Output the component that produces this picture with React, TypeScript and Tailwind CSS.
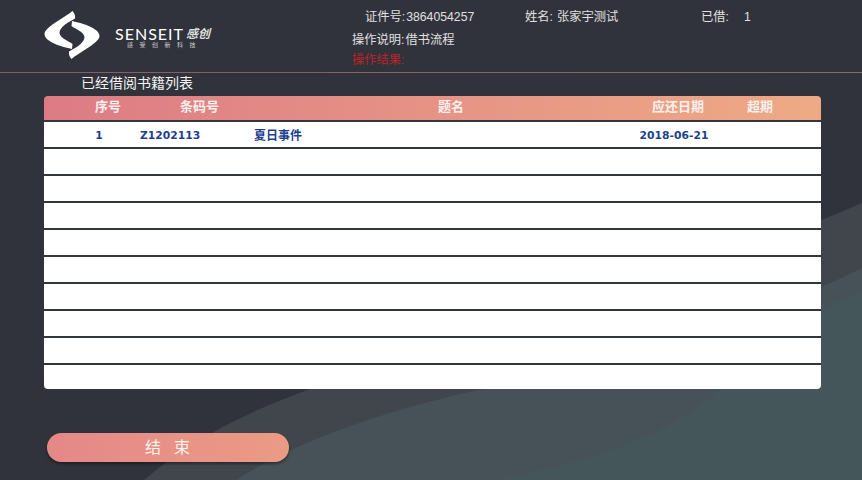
import React from "react";

const FONT = "font-['Liberation_Sans','Noto_Sans_CJK_SC',sans-serif]";

const rows = [
  { no: "1", code: "Z1202113", title: "夏日事件", due: "2018-06-21" },
  ...Array.from({ length: 9 }, () => ({ no: "", code: "", title: "", due: "" })),
];

const HALF =
  "M28 1 C30 3 31 6 30.5 8.5 C24 12 15 17 15 23 C15.5 28 24 31 28 34 L27.5 39 C18 37 0 32 0 24 C0 17 20 8 28 1 Z";

const Logo = () => (
  <svg width="56" height="50" viewBox="0 0 55 50" className="shrink-0">
    <g fill="#fff">
      <path d={HALF} />
      <path d={HALF} transform="rotate(180 27.5 25)" />
    </g>
  </svg>
);

export default function App() {
  return (
    <div className={`relative h-[480px] w-[862px] overflow-hidden bg-[#30333b] ${FONT}`}>
      {/* background waves */}
      <svg width="862" height="480" viewBox="0 0 862 480" className="absolute inset-0">
        <path d="M144 480 C190 440 250 410 313 388 C480 325 700 275 862 203 L862 480 Z" fill="#41464d" />
        <path d="M236 480 C290 445 380 410 489 388 C620 355 760 320 862 268 L862 480 Z" fill="#465257" />
        <path d="M495 480 C600 460 680 430 720 388 C750 355 780 325 822 308 L862 292 L862 480 Z" fill="#45565a" />
      </svg>

      <div className="relative flex h-full flex-col">
        <header className="flex h-[72px] shrink-0">
          <div className="flex w-[352px] shrink-0 items-start pl-[44px] pt-[10px]">
            <Logo />
            <div className="ml-[15px] mt-[16px] flex flex-col items-start">
              <div className="flex items-center leading-none text-white">
                <span className="font-['Lato',sans-serif] text-[16px] tracking-[1px]">SENSEIT</span>
                <span className="ml-[2px] text-[12px] font-bold italic text-[#dddddd]">感创</span>
              </div>
              <span className="ml-[12px] text-[6px] leading-none tracking-[6.5px] text-[#d0d0d0]">感受创新科技</span>
            </div>
          </div>
          <div className="flex flex-col pt-[7px] text-[12.25px] leading-[20px] text-[#e0e0e0]">
            <div className="flex">
              <span className="ml-[13px] w-[160px]">证件号:<span className="ml-[1px]">3864054257</span></span>
              <span className="w-[176px]">姓名:<span className="ml-[4px]">张家宇测试</span></span>
              <span className="w-[43px]">已借:</span>
              <span>1</span>
            </div>
            <div className="mt-[3px]">操作说明:<span className="ml-[1px]">借书流程</span></div>
            <div className="text-[#bd2226]">操作结果:</div>
          </div>
        </header>
        <div className="h-px bg-gradient-to-r from-[#8a5a68] to-[#8a6a60]" />

        <div className="pl-[81px] text-[14px] leading-[20px] text-[#f2f2f2]">已经借阅书籍列表</div>

        <div className="ml-[44px] mt-[3px] w-[777px] overflow-hidden rounded-[4px] bg-[#33353c]">
          <div className="grid h-[24px] grid-cols-[128px_55px_425px_52px_112px] items-center whitespace-nowrap bg-gradient-to-r from-[#dd7b85] to-[#eeaa85] pb-[2px] text-center text-[13px] font-bold leading-[22px] text-[#f8f0ee]">
            <span>序号</span>
            <span>条码号</span>
            <span className="pl-[23px]">题名</span>
            <span>应还日期</span>
            <span>超期</span>
          </div>
          {rows.map((row, i) => (
            <div
              key={i}
              className={`grid grid-cols-[96px_60px_429px_90px_102px] mt-[2px] ${i === 9 ? "h-[24px]" : "h-[25px]"} items-center whitespace-nowrap bg-white pt-[3px] font-['DejaVu_Sans','Noto_Sans_CJK_SC',sans-serif] text-[10.75px] font-bold text-[#1e3f8f]`}
            >
              <span className="pl-[14px] text-center">{row.no}</span>
              <span className="text-center">{row.code}</span>
              <span className="pl-[54px] text-[12px]">{row.title}</span>
              <span className="text-center">{row.due}</span>
              <span />
            </div>
          ))}
        </div>

        <button className="ml-[47px] mt-[44px] h-[29px] w-[242px] rounded-full bg-gradient-to-r from-[#e48888] to-[#eb9b84] pl-[12px] text-[16px] leading-none tracking-[13px] text-[#fdf3ef] shadow-[0_2px_3px_rgba(0,0,0,0.4)]">
          结束
        </button>
      </div>
    </div>
  );
}
